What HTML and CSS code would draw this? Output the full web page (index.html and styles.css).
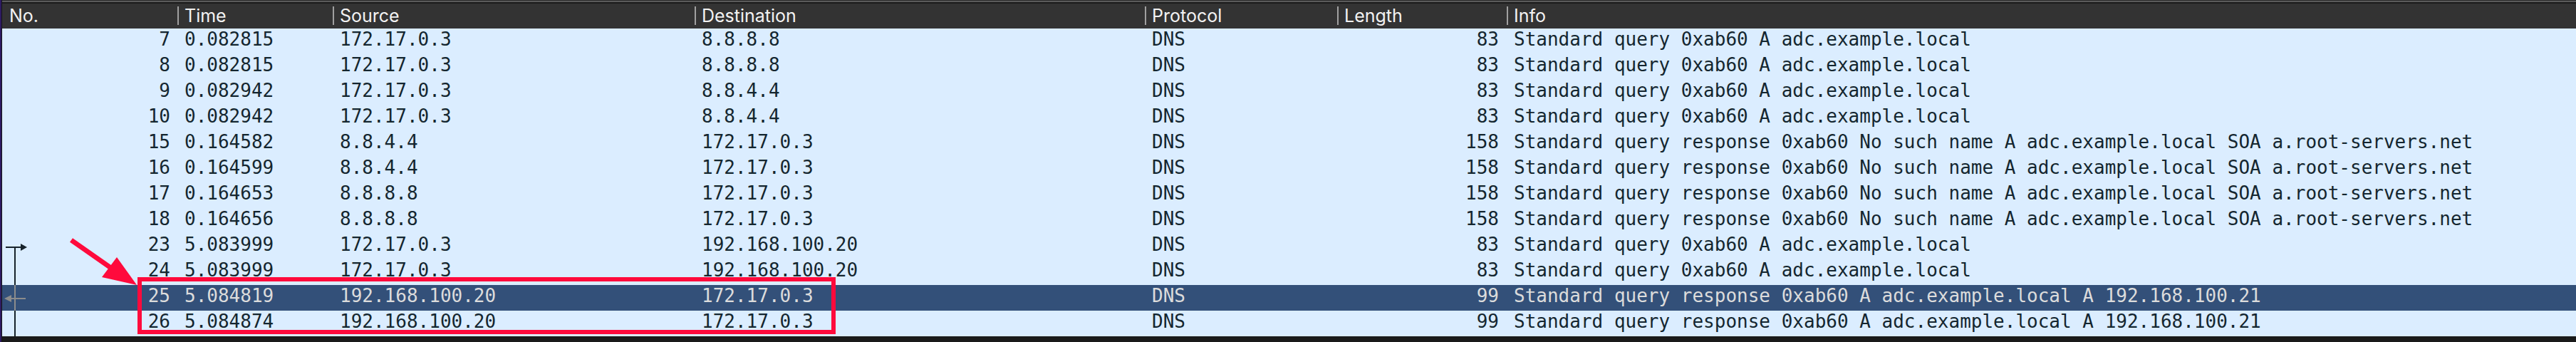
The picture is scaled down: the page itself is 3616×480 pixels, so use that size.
FILE: index.html
```html
<!DOCTYPE html>
<html>
<head>
<meta charset="utf-8">
<title>Packet list</title>
<link rel="stylesheet" href="styles.css">
</head>
<body>
<div class="app">
  <div class="edge"></div>
  <div class="pane">
    <div class="topline"></div>
    <div class="head">
      <div class="hcell first">No.</div>
      <div class="hcell">Time</div>
      <div class="hcell">Source</div>
      <div class="hcell">Destination</div>
      <div class="hcell">Protocol</div>
      <div class="hcell">Length</div>
      <div class="hcell">Info</div>
    </div>
    <div class="rows">
      <div class="row"><div class="c num">7</div><div class="c">0.082815</div><div class="c">172.17.0.3</div><div class="c">8.8.8.8</div><div class="c">DNS</div><div class="c num len">83</div><div class="c">Standard query 0xab60 A adc.example.local</div></div>
      <div class="row"><div class="c num">8</div><div class="c">0.082815</div><div class="c">172.17.0.3</div><div class="c">8.8.8.8</div><div class="c">DNS</div><div class="c num len">83</div><div class="c">Standard query 0xab60 A adc.example.local</div></div>
      <div class="row"><div class="c num">9</div><div class="c">0.082942</div><div class="c">172.17.0.3</div><div class="c">8.8.4.4</div><div class="c">DNS</div><div class="c num len">83</div><div class="c">Standard query 0xab60 A adc.example.local</div></div>
      <div class="row"><div class="c num">10</div><div class="c">0.082942</div><div class="c">172.17.0.3</div><div class="c">8.8.4.4</div><div class="c">DNS</div><div class="c num len">83</div><div class="c">Standard query 0xab60 A adc.example.local</div></div>
      <div class="row"><div class="c num">15</div><div class="c">0.164582</div><div class="c">8.8.4.4</div><div class="c">172.17.0.3</div><div class="c">DNS</div><div class="c num len">158</div><div class="c">Standard query response 0xab60 No such name A adc.example.local SOA a.root-servers.net</div></div>
      <div class="row"><div class="c num">16</div><div class="c">0.164599</div><div class="c">8.8.4.4</div><div class="c">172.17.0.3</div><div class="c">DNS</div><div class="c num len">158</div><div class="c">Standard query response 0xab60 No such name A adc.example.local SOA a.root-servers.net</div></div>
      <div class="row"><div class="c num">17</div><div class="c">0.164653</div><div class="c">8.8.8.8</div><div class="c">172.17.0.3</div><div class="c">DNS</div><div class="c num len">158</div><div class="c">Standard query response 0xab60 No such name A adc.example.local SOA a.root-servers.net</div></div>
      <div class="row"><div class="c num">18</div><div class="c">0.164656</div><div class="c">8.8.8.8</div><div class="c">172.17.0.3</div><div class="c">DNS</div><div class="c num len">158</div><div class="c">Standard query response 0xab60 No such name A adc.example.local SOA a.root-servers.net</div></div>
      <div class="row"><div class="c num"><svg class="rel" width="40" height="36" viewBox="0 0 40 36"><rect x="5" y="18" width="22" height="2" fill="#17232b"/><polygon points="26,14 35,19 26,24" fill="#17232b"/><rect x="17" y="18" width="2" height="18" fill="#17232b"/></svg>23</div><div class="c">5.083999</div><div class="c">172.17.0.3</div><div class="c">192.168.100.20</div><div class="c">DNS</div><div class="c num len">83</div><div class="c">Standard query 0xab60 A adc.example.local</div></div>
      <div class="row"><div class="c num"><svg class="rel" width="40" height="36" viewBox="0 0 40 36"><rect x="17" y="0" width="2" height="36" fill="#17232b"/></svg>24</div><div class="c">5.083999</div><div class="c">172.17.0.3</div><div class="c">192.168.100.20</div><div class="c">DNS</div><div class="c num len">83</div><div class="c">Standard query 0xab60 A adc.example.local</div></div>
      <div class="row sel"><div class="c num"><svg class="rel" width="40" height="36" viewBox="0 0 40 36"><rect x="17" y="0" width="2" height="36" fill="#8c8c8c"/><rect x="12" y="18" width="21" height="2" fill="#8c8c8c"/><polygon points="3,19 13,14 13,24" fill="#8c8c8c"/></svg>25</div><div class="c">5.084819</div><div class="c">192.168.100.20</div><div class="c">172.17.0.3</div><div class="c">DNS</div><div class="c num len">99</div><div class="c">Standard query response 0xab60 A adc.example.local A 192.168.100.21</div></div>
      <div class="row"><div class="c num"><svg class="rel" width="40" height="36" viewBox="0 0 40 36"><rect x="17" y="0" width="2" height="36" fill="#17232b"/></svg>26</div><div class="c">5.084874</div><div class="c">192.168.100.20</div><div class="c">172.17.0.3</div><div class="c">DNS</div><div class="c num len">99</div><div class="c">Standard query response 0xab60 A adc.example.local A 192.168.100.21</div></div>
    </div>
    <div class="foot"></div>
  </div>
  <div class="callout"></div>
  <svg class="pointer" width="220" height="120" viewBox="0 0 220 120">
    <line x1="100" y1="37" x2="160" y2="79" stroke="#ff0a3c" stroke-width="7"/>
    <polygon points="143,89 164,61 192,100" fill="#ff0a3c"/>
  </svg>
</div>
</body>
</html>
```
FILE: styles.css
```css
html, body {
  margin: 0;
  padding: 0;
  background: #1a1a1a;
}
.app {
  position: relative;
  display: flex;
  width: 3616px;
  height: 480px;
  overflow: hidden;
}
.edge {
  width: 3px;
  flex: none;
  background: linear-gradient(to right, #2e1b62 0 2px, #141414 2px 3px);
}
.pane {
  flex: 1;
  display: flex;
  flex-direction: column;
}
.topline {
  height: 5px;
  background: linear-gradient(to bottom, #2a2a2a 0 1px, #5b5b5b 1px 3px, #1b1b1b 3px 5px);
}
.head, .row {
  display: grid;
  grid-template-columns: 246px 218px 508px 632px 270px 238px 1fr;
}
.head {
  height: 35px;
  background: #333333;
  font-family: Inter, "Liberation Sans", sans-serif;
  font-size: 25px;
  line-height: 35px;
  color: #f2f2f2;
}
.hcell {
  padding-left: 10px;
  background: linear-gradient(#a0a0a0, #a0a0a0) no-repeat 0 4px / 2px 26px;
  white-space: nowrap;
}
.hcell.first {
  background: none;
  padding-left: 10px;
}
.rows {
  background: #dbedff;
}
.row {
  height: 36px;
  font-family: "DejaVu Sans Mono", "Liberation Mono", monospace;
  font-size: 26px;
  line-height: 30px;
  color: #14262f;
}
.row.sel {
  background: #335079;
  color: #dcdcdc;
}
.c {
  padding: 0 0 6px 10px;
  white-space: nowrap;
}
.c.num {
  position: relative;
  text-align: right;
  padding: 0 10px 6px 0;
}
.c.len {
  padding-right: 11px;
}
.rel {
  position: absolute;
  left: 0;
  top: 0;
}
.foot {
  flex: 1;
  background: #1a1a1a;
}
.callout {
  position: absolute;
  left: 193px;
  top: 389px;
  width: 968px;
  height: 68px;
  border: 6px solid #ff0a3c;
}
.pointer {
  position: absolute;
  left: 0;
  top: 300px;
}
```
